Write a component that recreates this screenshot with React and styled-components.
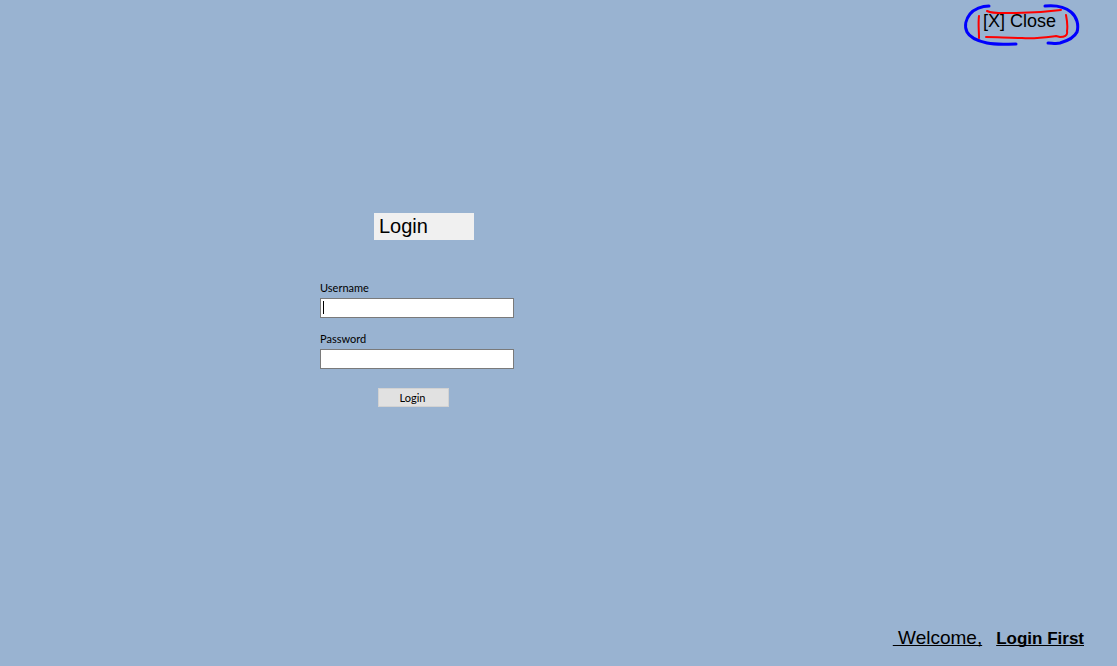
import React from "react";
import styled, { createGlobalStyle } from "styled-components";

const GlobalStyle = createGlobalStyle`
  *, *::before, *::after { box-sizing: border-box; }
  body {
    margin: 0;
    background: #99b3d1;
    color: #000;
    font-family: "Liberation Sans", Arial, sans-serif;
  }
`;

const Page = styled.div`
  min-height: 100vh;
  display: flex;
  flex-direction: column;
`;

const TopBar = styled.header`
  display: flex;
  justify-content: flex-end;
  padding: 4px 37px 0 0;
`;

const CloseButton = styled.button`
  position: relative;
  padding: 6px 24px 20px 20px;
  border: 0;
  background: none;
  color: inherit;
  font: 18px/22px "Liberation Sans", Arial, sans-serif;
  white-space: nowrap;
  cursor: pointer;
`;

const Scribble = styled.svg`
  position: absolute;
  top: 0;
  left: 0;
  width: 117px;
  height: 44px;
  fill: none;
  stroke-linecap: round;
  stroke-linejoin: round;
  pointer-events: none;
`;

const Main = styled.main`
  flex: 1;
  display: grid;
  grid-template-columns: 320fr 194px 603fr;
  align-content: start;
  padding-top: 161px;
`;

const LoginForm = styled.form`
  grid-column: 2;
  display: flex;
  flex-direction: column;
`;

const Title = styled.h1`
  width: 100px;
  margin: 0 0 40px 54px;
  padding: 1px 5px 2px;
  background: #f0f0f0;
  font-size: 20px;
  line-height: 24px;
  font-weight: 400;
`;

const Field = styled.div`
  position: relative;
  display: flex;
  flex-direction: column;
  gap: 2px;
  margin-bottom: 13px;
`;

const Label = styled.label`
  font: 11px/16px Lato, sans-serif;
`;

const Input = styled.input`
  width: 100%;
  height: 20px;
  padding: 0 3px;
  border: 1px solid #7a7a7a;
  border-radius: 0;
  outline: none;
  background: #fff;
  font: 11px/16px Lato, sans-serif;
  caret-color: transparent;
`;

const Caret = styled.span`
  position: absolute;
  left: 3px;
  bottom: 4px;
  width: 1px;
  height: 13px;
  background: #000;
`;

const SubmitButton = styled.button`
  width: 71px;
  height: 19px;
  margin: 6px 0 0 58px;
  padding: 0 2px 0 0;
  border: 1px solid #d2d2d2;
  background: #e1e1e1;
  color: inherit;
  font: 11px/16px Lato, sans-serif;
`;

const Footer = styled.footer`
  display: flex;
  justify-content: flex-end;
  align-items: baseline;
  gap: 14px;
  padding: 0 33px 15px 0;
  line-height: 24px;
`;

const Welcome = styled.span`
  font-size: 19px;
  white-space: pre;
  text-decoration: underline 1px;
  text-decoration-skip-ink: none;
`;

const LoginLink = styled.a`
  color: inherit;
  font-size: 17px;
  font-weight: 700;
  text-decoration: underline 1px;
  text-decoration-skip-ink: none;
`;

export default function App() {
  return (
    <>
      <GlobalStyle />
      <Page>
        <TopBar>
          <CloseButton type="button">
            [X] Close
            <Scribble viewBox="963 4 117 44" aria-hidden="true">
              <g stroke="#0000fe" strokeWidth="3">
                <path d="M989 6C982 6 974 9 970 14C966 19 964 26 967 32C970 38 978 41 987 43C997 45 1006 44 1016 44" />
                <path d="M1045 6C1055 5 1065 7 1071 12C1077 17 1079 25 1077 32C1074 38 1067 41 1060 43C1056 44 1052 43 1048 43" />
              </g>
              <g stroke="#fe0000" strokeWidth="2">
                <path d="M987 11C993 14 1004 13 1015 13C1032 13 1046 12 1061 10" />
                <path d="M979 16C978 23 979 31 979 38" />
                <path d="M986 37C998 37 1008 38 1022 38C1036 39 1048 37 1056 36L1060 37C1064 37 1068 36 1067 31C1068 25 1067 20 1066 15" />
              </g>
            </Scribble>
          </CloseButton>
        </TopBar>
        <Main>
          <LoginForm onSubmit={(event) => event.preventDefault()}>
            <Title>Login</Title>
            <Field>
              <Label htmlFor="username">Username</Label>
              <Input id="username" type="text" autoComplete="off" />
              <Caret aria-hidden="true" />
            </Field>
            <Field>
              <Label htmlFor="password">Password</Label>
              <Input id="password" type="password" autoComplete="off" />
            </Field>
            <SubmitButton type="submit">Login</SubmitButton>
          </LoginForm>
        </Main>
        <Footer>
          <Welcome>{" Welcome,"}</Welcome>
          <LoginLink href="#login">Login First</LoginLink>
        </Footer>
      </Page>
    </>
  );
}
